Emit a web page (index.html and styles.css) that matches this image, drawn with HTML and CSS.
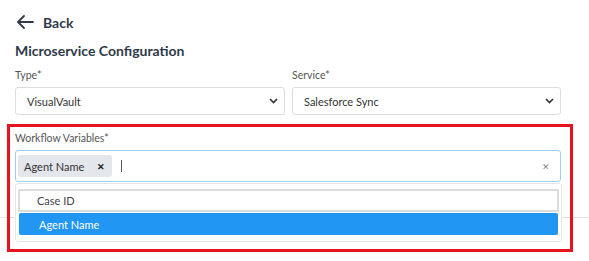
FILE: index.html
```html
<!DOCTYPE html>
<html lang="en">
<head>
  <meta charset="UTF-8" />
  <title>Microservice Configuration</title>
  <link rel="stylesheet" href="styles.css">
</head>
<body>
  <div class="page">
    <a class="back-link" href="#">
      <svg class="back-icon" width="18" height="14" viewBox="0 0 18 14">
        <path d="M17 7H2M8 1L2 7l6 6" fill="none" stroke="#2f3a4a" stroke-width="1.8" stroke-linecap="round" stroke-linejoin="round"/>
      </svg>
      <span>Back</span>
    </a>
    <h2 class="page-title">Microservice Configuration</h2>

    <div class="form-row">
      <div class="field">
        <label class="field-label">Type*</label>
        <div class="select">
          <span>VisualVault</span>
          <svg class="chevron" width="9" height="6" viewBox="0 0 9 6"><path d="M1 1l3.5 3.5L8 1" fill="none" stroke="#333" stroke-width="1.6"/></svg>
        </div>
      </div>
      <div class="field">
        <label class="field-label">Service*</label>
        <div class="select">
          <span>Salesforce Sync</span>
          <svg class="chevron" width="9" height="6" viewBox="0 0 9 6"><path d="M1 1l3.5 3.5L8 1" fill="none" stroke="#333" stroke-width="1.6"/></svg>
        </div>
      </div>
    </div>

    <div class="highlight">
      <label class="field-label">Workflow Variables*</label>
      <div class="multi">
        <div class="multi-input">
          <span class="chip">Agent Name <span class="chip-remove">&#x2715;</span></span>
          <span class="caret"></span>
          <span class="clear">&#x2715;</span>
        </div>
        <ul class="dropdown">
          <li class="option focused">Case ID</li>
          <li class="option selected">Agent Name</li>
        </ul>
      </div>
    </div>
  </div>
  <div class="divider"></div>
</body>
</html>
```

FILE: styles.css
```css
* { box-sizing: border-box; }

body {
  margin: 0;
  font-family: Lato, "Open Sans", sans-serif;
  color: #333;
  background: #fff;
  position: relative;
  height: 261px;
  overflow: hidden;
}

.page {
  padding: 13px 29px 0 15px;
  position: relative;
  z-index: 1;
}

.back-link {
  display: flex;
  align-items: center;
  gap: 9px;
  color: #2f3a4a;
  text-decoration: none;
  font-weight: 700;
  font-size: 14px;
  height: 18px;
  padding-left: 1px;
}

.page-title {
  margin: 10px 0 0;
  font-size: 14px;
  font-weight: 700;
  color: #2f3a4a;
  line-height: 20px;
}

.form-row {
  display: grid;
  grid-template-columns: 270px 269px;
  gap: 7px;
  margin-top: 7px;
}

.field-label {
  display: block;
  font-size: 10.5px;
  color: #555;
  line-height: 14px;
  margin-bottom: 5px;
}

.select {
  height: 28px;
  border: 1px solid #dcdcdc;
  border-radius: 3px;
  display: flex;
  align-items: center;
  justify-content: space-between;
  padding: 0 6px 0 11px;
  font-size: 11px;
  color: #333;
}

.highlight {
  margin: 9px 0 0 -8px;
  width: 566px;
  height: 128px;
  border: 3px solid #e8121f;
  padding: 4px 0 0 5px;
}

.highlight .field-label {
  margin-bottom: 5px;
}

.multi {
  position: relative;
  width: 546px;
}

.multi-input {
  height: 32px;
  border: 1px solid #9fcdf6;
  border-radius: 3px;
  display: flex;
  align-items: center;
  padding: 0 10px 0 2px;
}

.chip {
  height: 22px;
  background: #e3e6ea;
  border-radius: 3px;
  display: flex;
  align-items: center;
  padding: 0 7px 0 6px;
  gap: 13px;
  font-size: 11px;
  color: #333;
}

.chip-remove {
  font-size: 9px;
  font-weight: 700;
  color: #222;
}

.caret {
  width: 1px;
  height: 12px;
  background: #555;
  margin-left: 9px;
}

.clear {
  margin-left: auto;
  font-size: 9px;
  color: #888;
}

.dropdown {
  position: absolute;
  left: 0;
  right: -1px;
  top: 33px;
  margin: 0;
  padding: 5px 2px 5px 2px;
  list-style: none;
  background: #fff;
  border: 1px solid #e6e6e6;
  border-radius: 3px;
  height: 59px;
}

.option {
  height: 22px;
  display: flex;
  align-items: center;
  font-size: 11px;
  padding-left: 17px;
  color: #444;
}

.option.focused {
  border: 2px solid #dcdcdc;
  border-radius: 1px;
  height: 23px;
}

.option.selected {
  background: #2196f2;
  color: #fff;
  border-radius: 2px;
  margin: 1px 1px 0;
  padding-left: 20px;
}

.divider {
  position: absolute;
  left: 0;
  right: 0;
  top: 217px;
  border-top: 1px solid #e2e2e2;
}
```
